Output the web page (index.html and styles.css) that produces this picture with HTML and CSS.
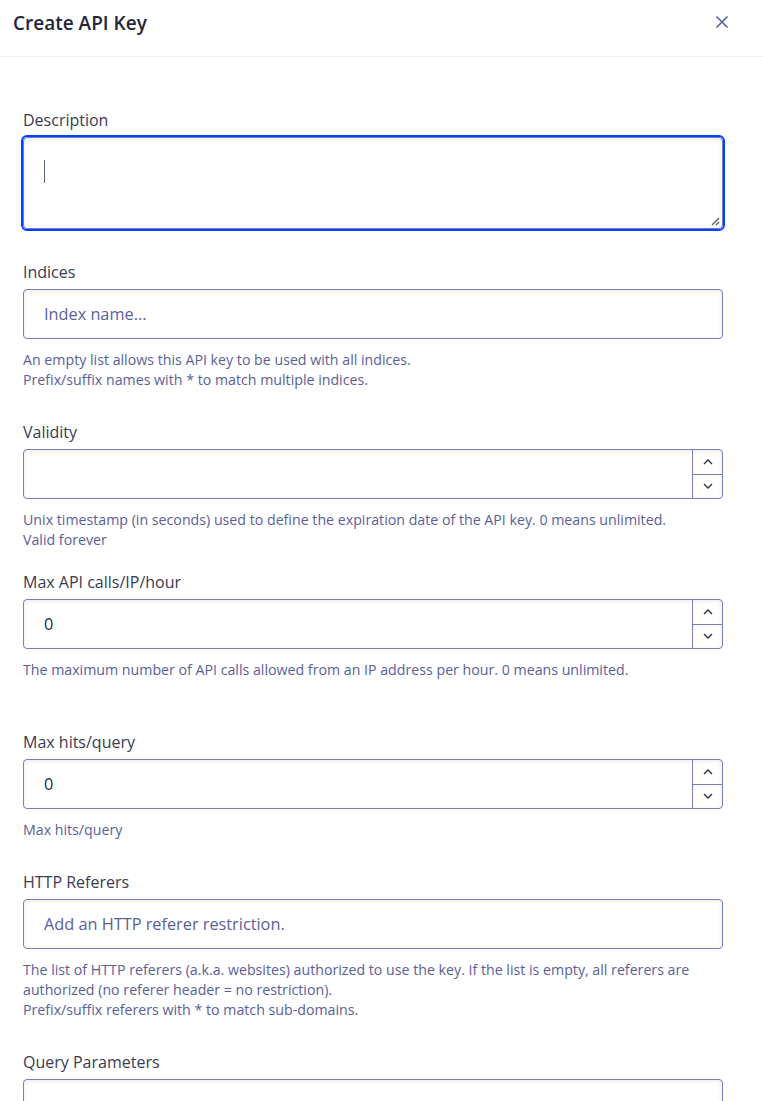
FILE: index.html
```html
<!DOCTYPE html>
<html lang="en">
<head>
<meta charset="utf-8">
<title>Create API Key</title>
<link rel="stylesheet" href="styles.css">
</head>
<body>
<div class="modal">
  <header class="modal-header">
    <h1 class="modal-title">Create API Key</h1>
    <button class="close-btn" aria-label="Close">
      <svg width="14" height="14" viewBox="0 0 14 14"><path d="M1.5 1.5 L12.5 12.5 M12.5 1.5 L1.5 12.5" stroke="#5a5e9a" stroke-width="1.6" fill="none"/></svg>
    </button>
  </header>
  <form class="form">
    <div class="field field-first">
      <label class="label">Description</label>
      <div class="textarea focused">
        <span class="caret"></span>
        <svg class="grip" width="10" height="10" viewBox="0 0 10 10"><path d="M9 2 L2 9 M9 6 L6 9" stroke="#555" stroke-width="1.2" fill="none"/></svg>
      </div>
    </div>

    <div class="field field-after-textarea">
      <label class="label">Indices</label>
      <div class="input"><span class="placeholder">Index name...</span></div>
      <p class="help">An empty list allows this API key to be used with all indices.<br>Prefix/suffix names with * to match multiple indices.</p>
    </div>

    <div class="field">
      <label class="label">Validity</label>
      <div class="input number">
        <span class="value"></span>
        <div class="spin">
          <span class="spin-btn"><svg width="10" height="6" viewBox="0 0 10 6"><path d="M1 5 L5 1 L9 5" stroke="#2b2d45" stroke-width="1.3" fill="none"/></svg></span>
          <span class="spin-btn"><svg width="10" height="6" viewBox="0 0 10 6"><path d="M1 1 L5 5 L9 1" stroke="#2b2d45" stroke-width="1.3" fill="none"/></svg></span>
        </div>
      </div>
      <p class="help">Unix timestamp (in seconds) used to define the expiration date of the API key. 0 means unlimited.<br>Valid forever</p>
    </div>

    <div class="field field-tight">
      <label class="label">Max API calls/IP/hour</label>
      <div class="input number">
        <span class="value">0</span>
        <div class="spin">
          <span class="spin-btn"><svg width="10" height="6" viewBox="0 0 10 6"><path d="M1 5 L5 1 L9 5" stroke="#2b2d45" stroke-width="1.3" fill="none"/></svg></span>
          <span class="spin-btn"><svg width="10" height="6" viewBox="0 0 10 6"><path d="M1 1 L5 5 L9 1" stroke="#2b2d45" stroke-width="1.3" fill="none"/></svg></span>
        </div>
      </div>
      <p class="help">The maximum number of API calls allowed from an IP address per hour. 0 means unlimited.</p>
    </div>

    <div class="field field-loose">
      <label class="label">Max hits/query</label>
      <div class="input number">
        <span class="value">0</span>
        <div class="spin">
          <span class="spin-btn"><svg width="10" height="6" viewBox="0 0 10 6"><path d="M1 5 L5 1 L9 5" stroke="#2b2d45" stroke-width="1.3" fill="none"/></svg></span>
          <span class="spin-btn"><svg width="10" height="6" viewBox="0 0 10 6"><path d="M1 1 L5 5 L9 1" stroke="#2b2d45" stroke-width="1.3" fill="none"/></svg></span>
        </div>
      </div>
      <p class="help">Max hits/query</p>
    </div>

    <div class="field">
      <label class="label">HTTP Referers</label>
      <div class="input"><span class="placeholder">Add an HTTP referer restriction.</span></div>
      <p class="help">The list of HTTP referers (a.k.a. websites) authorized to use the key. If the list is empty, all referers are authorized (no referer header = no restriction).<br>Prefix/suffix referers with * to match sub-domains.</p>
    </div>

    <div class="field">
      <label class="label">Query Parameters</label>
      <div class="input"></div>
    </div>
  </form>
</div>
</body>
</html>
```

FILE: styles.css
```css
* { box-sizing: border-box; }
html, body { margin: 0; padding: 0; background: #fff; }
body {
  font-family: "Open Sans", "Noto Sans", "Liberation Sans", sans-serif;
  color: #3a3b52;
  overflow: hidden;
}
.modal { width: 763px; }
.modal-header {
  height: 57px;
  border-bottom: 1px solid #f0f0f4;
  display: flex;
  align-items: flex-start;
  justify-content: space-between;
  padding: 10px 34px 0 13px;
}
.modal-title {
  margin: 0;
  font-size: 19px;
  font-weight: 600;
  line-height: 26px;
  color: #23263b;
}
.close-btn {
  border: 0;
  background: none;
  padding: 0;
  margin-top: 5px;
  width: 14px;
  height: 14px;
  display: flex;
}
.form {
  padding: 51px 40px 0 23px;
  display: flex;
  flex-direction: column;
}
.field { display: flex; flex-direction: column; margin-top: 30px; }
.field-first { margin-top: 0; }
.field-after-textarea { margin-top: 31px; }
.field-tight { margin-top: 20px; }
.field-loose { margin-top: 50px; }
.label {
  font-size: 16px;
  line-height: 24px;
  margin-bottom: 5px;
  color: #3a3b52;
}
.textarea {
  position: relative;
  height: 92px;
  border: 1px solid #7a7dbd;
  border-radius: 4px;
  outline: 2px solid #0040ff;
  outline-offset: 0;
  box-shadow: inset 0 1px 4px rgba(35, 38, 59, 0.12);
  padding: 22px 20px;
}
.caret {
  display: block;
  width: 1px;
  height: 23px;
  background: #5a5e9a;
}
.grip { position: absolute; right: 2px; bottom: 2px; }
.input {
  height: 50px;
  border: 1px solid #7a7dbd;
  border-radius: 4px;
  box-shadow: inset 0 1px 4px rgba(35, 38, 59, 0.1);
  display: flex;
  align-items: center;
  padding-left: 20px;
  font-size: 16.3px;
}
.placeholder { color: #5a5e9a; }
.value { color: #23263b; flex: 1; }
.number { padding-right: 0; }
.spin {
  align-self: stretch;
  width: 30px;
  border-left: 1px solid #7a7dbd;
  display: flex;
  flex-direction: column;
}
.spin-btn {
  flex: 1;
  display: flex;
  align-items: center;
  justify-content: center;
}
.spin-btn + .spin-btn { border-top: 1px solid #7a7dbd; }
.help {
  margin: 11px 0 0;
  font-size: 14.2px;
  line-height: 20px;
  color: #5a5e9a;
}
```
